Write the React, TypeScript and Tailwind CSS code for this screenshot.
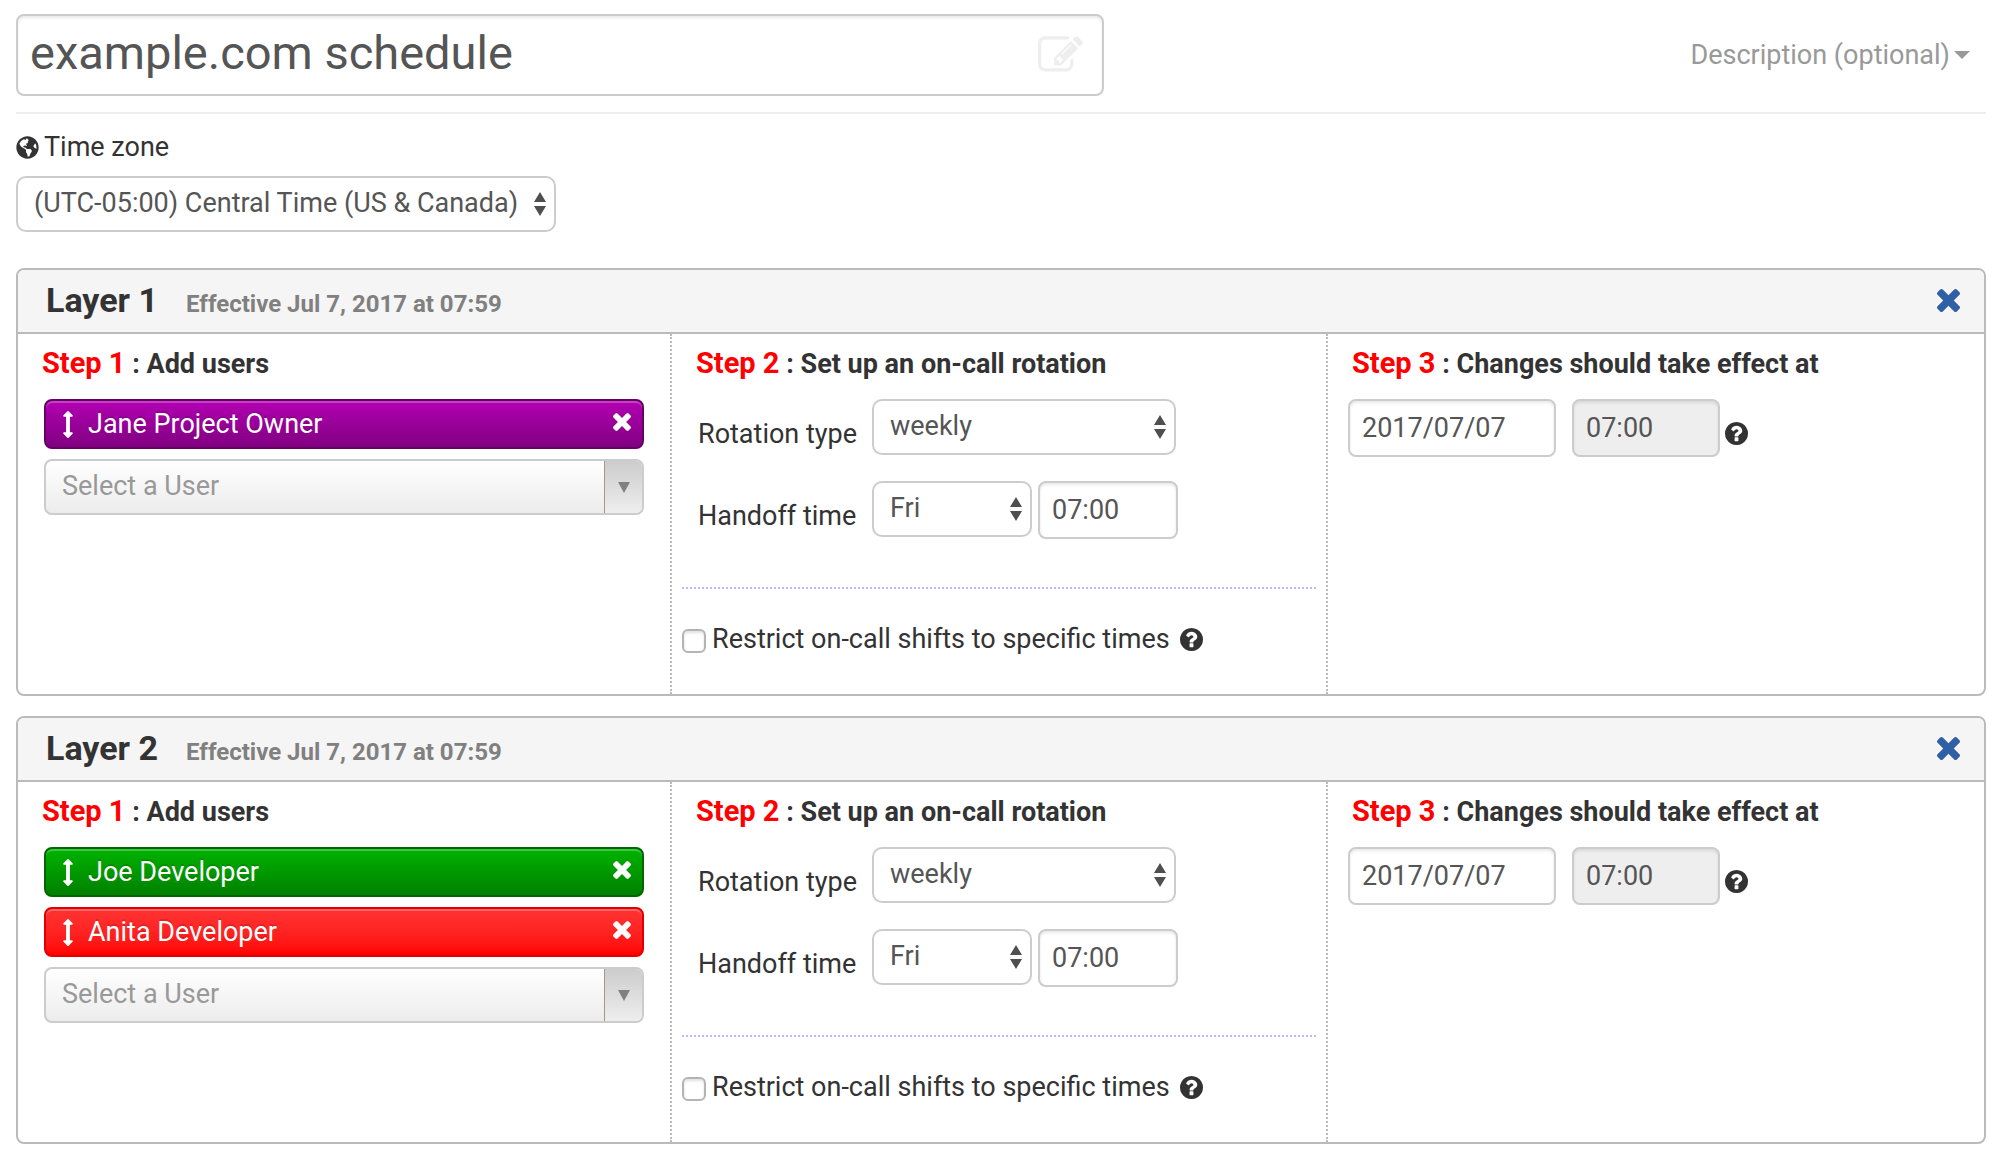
import { useState } from 'react';
import { FaGlobeAmericas } from 'react-icons/fa';

type User = {
  name: string;
  color: string;
};

type Layer = {
  id: number;
  effective: string;
  users: User[];
};

const initialLayers: Layer[] = [
  {
    id: 1,
    effective: 'Effective Jul 7, 2017 at 07:59',
    users: [{ name: 'Jane Project Owner', color: 'border-[#660066] from-[#b300b3] to-[#800080]' }],
  },
  {
    id: 2,
    effective: 'Effective Jul 7, 2017 at 07:59',
    users: [
      { name: 'Joe Developer', color: 'border-[#006600] from-[#00b300] to-[#008000]' },
      { name: 'Anita Developer', color: 'border-[#e00000] from-[#ff3333] to-[#ff0000]' },
    ],
  },
];

const inputClass =
  'h-[58px] rounded-lg border-2 border-[#cccccc] bg-white px-3 text-[#555555] shadow-[inset_0_2px_3px_rgba(0,0,0,0.09)] outline-none disabled:bg-[#eeeeee]';

const EditIcon = ({ className }: { className?: string }) => (
  <svg viewBox="0 0 1792 1792" fill="currentColor" className={className} aria-hidden="true">
    <path d="M888 1184l116-116-152-152-116 116v56h96v96h56zm440-720q-16-16-33 1l-350 350q-17 17-1 33t33-1l350-350q17-17 1-33zm80 594v190q0 119-84.5 203.5t-203.5 84.5h-832q-119 0-203.5-84.5t-84.5-203.5v-832q0-119 84.5-203.5t203.5-84.5h832q63 0 117 25 15 7 18 23 3 17-9 29l-49 49q-14 14-32 8-23-6-45-6h-832q-66 0-113 47t-47 113v832q0 66 47 113t113 47h832q66 0 113-47t47-113v-126q0-13 9-22l64-64q15-15 35-7t20 29zm-96-738l288 288-672 672h-288v-288zm444 132l-92 92-288-288 92-92q28-28 68-28t68 28l152 152q28 28 28 68t-28 68z" />
  </svg>
);

const TimesIcon = ({ className }: { className?: string }) => (
  <svg viewBox="302 366 1188 1188" fill="currentColor" className={className} aria-hidden="true">
    <path d="M1490 1322q0 40-28 68l-136 136q-28 28-68 28t-68-28l-294-294-294 294q-28 28-68 28t-68-28l-136-136q-28-28-28-68t28-68l294-294-294-294q-28-28-28-68t28-68l136-136q28-28 68-28t68 28l294 294 294-294q28-28 68-28t68 28l136 136q28 28 28 68t-28 68l-294 294 294 294q28 28 28 68z" />
  </svg>
);

const MoveIcon = ({ className }: { className?: string }) => (
  <svg viewBox="576 0 640 1792" fill="currentColor" className={className} aria-hidden="true">
    <path d="M1216 320q0 26-19 45t-45 19h-128v1024h128q26 0 45 19t19 45-19 45l-256 256q-19 19-45 19t-45-19l-256-256q-19-19-19-45t19-45 45-19h128v-1024h-128q-26 0-45-19t-19-45 19-45l256-256q19-19 45-19t45 19l256 256q19 19 19 45z" />
  </svg>
);

const HelpIcon = () => (
  <svg viewBox="128 128 1536 1536" fill="currentColor" className="size-[23px]" aria-hidden="true">
    <path d="M1024 1376v-192q0-14-9-23t-23-9h-192q-14 0-23 9t-9 23v192q0 14 9 23t23 9h192q14 0 23-9t9-23zm256-672q0-88-55.5-163t-138.5-116-170-41q-243 0-371 213-15 24 8 42l132 100q7 6 19 6 16 0 25-12 53-68 86-92 34-24 86-24 48 0 85.5 26t37.5 59q0 38-20 61t-68 45q-63 28-115.5 86.5t-52.5 125.5v36q0 14 9 23t23 9h192q14 0 23-9t9-23q0-19 21.5-49.5t54.5-49.5q32-18 49-28.5t46-35 44.5-48 28-60.5 12.5-81zm384 192q0 209-103 385.5t-279.5 279.5-385.5 103-385.5-103-279.5-279.5-103-385.5 103-385.5 279.5-279.5 385.5-103 385.5 103 279.5 279.5 103 385.5z" />
  </svg>
);

type SelectProps = {
  id: string;
  options: string[];
  className: string;
};

const Select = ({ id, options, className }: SelectProps) => (
  <div className={`relative ${className}`}>
    <select
      id={id}
      className="h-14 w-full appearance-none rounded-[10px] border-2 border-[#cccccc] bg-white pb-0.5 pl-4 pr-7 text-[#555555] outline-none"
    >
      {options.map((option) => (
        <option key={option}>{option}</option>
      ))}
    </select>
    <svg
      viewBox="0 0 12 24"
      fill="#4f4f4f"
      className="pointer-events-none absolute right-2.5 top-4 h-6 w-3"
      aria-hidden="true"
    >
      <path d="M6 0l6 10H0zM6 24l6-10H0z" />
    </svg>
  </div>
);

const StepHeading = ({ step, title }: { step: number; title: string }) => (
  <h3 className="mb-[19px] pl-6 font-bold leading-8">
    <span className="text-[29px] text-[#ff0000]">Step {step}</span> : {title}
  </h3>
);

type LayerPanelProps = {
  layer: Layer;
  onRemove: () => void;
  onRemoveUser: (name: string) => void;
};

const LayerPanel = ({ layer, onRemove, onRemoveUser }: LayerPanelProps) => {
  const prefix = `layer-${layer.id}`;

  return (
    <section className="overflow-hidden rounded-lg border-2 border-[#bbbbbb]">
      <header className="flex items-center justify-between border-b-2 border-[#bbbbbb] bg-[#f5f5f5] pb-3 pl-7 pr-6 pt-2.5">
        <div className="flex items-baseline gap-7">
          <h2 className="text-[34px] font-bold leading-10">Layer {layer.id}</h2>
          <span className="text-2xl font-bold leading-8 text-[#808080]">{layer.effective}</span>
        </div>
        <button type="button" onClick={onRemove} aria-label={`Remove layer ${layer.id}`}>
          <TimesIcon className="size-[23px] text-[#2f5fa5]" />
        </button>
      </header>

      <div className="grid grid-cols-[654fr_656fr_656fr]">
        {/* Step 1 */}
        <div className="border-r-2 border-dotted border-[#bbbbbb] pt-[13px]">
          <StepHeading step={1} title="Add users" />
          <div className="flex flex-col gap-2.5 px-[26px]">
            {layer.users.map((user) => (
              <div
                key={user.name}
                className={`flex items-center rounded-lg border-2 bg-linear-to-b py-[7px] pl-[17px] pr-[11px] leading-8 text-white shadow-[inset_0_2px_0_rgba(255,255,255,0.25)] ${user.color}`}
              >
                <MoveIcon className="mr-[15px] h-[27px] w-2.5" />
                <span className="flex-1 [text-shadow:0_-2px_0_rgba(0,0,0,0.15)]">{user.name}</span>
                <button
                  type="button"
                  onClick={() => onRemoveUser(user.name)}
                  aria-label={`Remove ${user.name}`}
                  className="pb-1"
                >
                  <TimesIcon className="size-[18px]" />
                </button>
              </div>
            ))}
            <div className="flex h-14 overflow-hidden rounded-lg border-2 border-[#cccccc] bg-linear-to-b from-white to-[#ececec]">
              <input
                type="text"
                placeholder="Select a User"
                aria-label="Select a User"
                className="min-w-0 flex-1 bg-transparent pb-0.5 pl-4 text-[#555555] outline-none placeholder:text-[#999999]"
              />
              <button
                type="button"
                aria-label="Show users"
                className="flex w-[38px] items-center justify-center border-l border-[#a8958b] bg-linear-to-b from-[#cccccc] to-[#eeeeee]"
              >
                <svg viewBox="0 0 12 11" fill="#808080" className="h-[11px] w-3" aria-hidden="true">
                  <path d="M0 0h12L6 11z" />
                </svg>
              </button>
            </div>
          </div>
        </div>

        {/* Step 2 */}
        <div className="border-r-2 border-dotted border-[#bbbbbb] pb-[39px] pt-[13px]">
          <StepHeading step={2} title="Set up an on-call rotation" />
          <div className="px-2.5">
            <div className="mb-[26px] flex items-start">
              <label htmlFor={`${prefix}-type`} className="w-[190px] pl-4 pt-[19px] leading-8">
                Rotation type
              </label>
              <Select id={`${prefix}-type`} options={['weekly', 'daily', 'custom']} className="w-[304px]" />
            </div>
            <div className="flex items-start">
              <label htmlFor={`${prefix}-day`} className="w-[190px] pl-4 pt-[19px] leading-8">
                Handoff time
              </label>
              <Select
                id={`${prefix}-day`}
                options={['Fri', 'Sat', 'Sun', 'Mon', 'Tue', 'Wed', 'Thu']}
                className="mr-1.5 w-40"
              />
              <input
                type="text"
                defaultValue="07:00"
                aria-label="Handoff hour"
                className={`w-[140px] ${inputClass}`}
              />
            </div>
            <hr className="mb-[34px] mt-12 border-t-2 border-dotted border-[#bbbbff]" />
            <div className="flex items-center gap-1.5 leading-8">
              <input
                id={`${prefix}-restrict`}
                type="checkbox"
                className="mt-1 size-6 appearance-none rounded-md border-2 border-[#b4b4b4] bg-white shadow-[inset_0_2px_3px_rgba(0,0,0,0.12)] checked:bg-[#2f5fa5]"
              />
              <label htmlFor={`${prefix}-restrict`}>Restrict on-call shifts to specific times</label>
              <button type="button" aria-label="About restrictions" className="ml-1">
                <HelpIcon />
              </button>
            </div>
          </div>
        </div>

        {/* Step 3 */}
        <div className="pt-[13px]">
          <StepHeading step={3} title="Changes should take effect at" />
          <div className="flex items-center pl-5">
            <input
              type="text"
              defaultValue="2017/07/07"
              aria-label="Start date"
              className={`mr-4 w-[208px] ${inputClass}`}
            />
            <input
              type="text"
              defaultValue="07:00"
              aria-label="Start time"
              disabled
              className={`w-[148px] ${inputClass}`}
            />
            <button type="button" aria-label="About start time" className="ml-[5px] mt-2.5">
              <HelpIcon />
            </button>
          </div>
        </div>
      </div>
    </section>
  );
};

export default function App() {
  const [layers, setLayers] = useState(initialLayers);

  const removeLayer = (id: number) => {
    setLayers(layers.filter((layer) => layer.id !== id));
  };

  const removeUser = (id: number, name: string) => {
    setLayers(
      layers.map((layer) =>
        layer.id === id ? { ...layer, users: layer.users.filter((u) => u.name !== name) } : layer
      )
    );
  };

  return (
    <main className="min-h-screen bg-white pb-5 pl-4 pr-3.5 pt-3.5 font-['Roboto',sans-serif] text-[27px] text-[#333333]">
      <div className="grid grid-cols-[1088fr_882fr] items-center border-b-2 border-[#eeeeee] pb-4">
        <div className="relative">
          <input
            type="text"
            defaultValue="example.com schedule"
            aria-label="Schedule name"
            className="h-[82px] w-full rounded-lg border-2 border-[#cccccc] bg-white pb-1.5 pl-3 pr-20 text-[47px] text-[#555555] shadow-[inset_0_2px_3px_rgba(0,0,0,0.09)] outline-none"
          />
          <EditIcon className="pointer-events-none absolute right-[21px] top-[19px] size-[45px] text-[#eeeeee]" />
        </div>
        <button type="button" className="flex items-center gap-1 justify-self-end pr-4 leading-8 text-[#999999]">
          Description (optional)
          <svg viewBox="0 0 16 8" fill="currentColor" className="h-2 w-4" aria-hidden="true">
            <path d="M0 0h16L8 8z" />
          </svg>
        </button>
      </div>

      <div className="mb-9 mt-[17px]">
        <label htmlFor="timezone" className="mb-[13px] flex items-center gap-[5px] leading-8">
          <FaGlobeAmericas className="size-[23px]" />
          Time zone
        </label>
        <Select id="timezone" options={['(UTC-05:00) Central Time (US & Canada)']} className="w-[540px]" />
      </div>

      <div className="flex flex-col gap-5">
        {layers.map((layer) => (
          <LayerPanel
            key={layer.id}
            layer={layer}
            onRemove={() => removeLayer(layer.id)}
            onRemoveUser={(name) => removeUser(layer.id, name)}
          />
        ))}
      </div>
    </main>
  );
}
